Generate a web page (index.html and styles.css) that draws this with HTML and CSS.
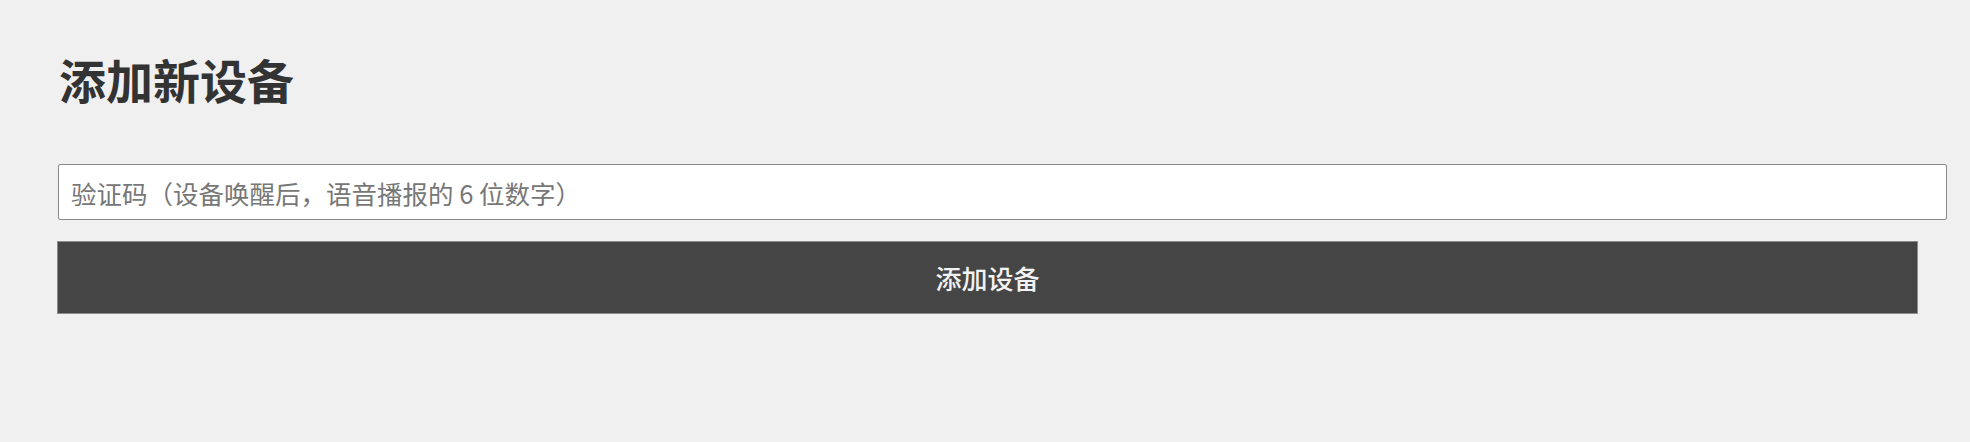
FILE: index.html
```html
<!DOCTYPE html>
<html lang="zh-CN">
<head>
<meta charset="utf-8">
<title>添加新设备</title>
<link rel="stylesheet" href="styles.css">
</head>
<body>
<main class="page">
  <h1 class="title">添加新设备</h1>
  <form class="form">
    <input class="code-input" type="text" placeholder="验证码（设备唤醒后，语音播报的 6 位数字）">
    <button class="submit" type="button">添加设备</button>
  </form>
</main>
</body>
</html>
```

FILE: styles.css
```css
html, body {
  margin: 0;
  padding: 0;
  background: #f0f0f0;
}

body {
  font-family: "Noto Sans CJK SC", "Noto Sans", sans-serif;
  color: #333333;
}

.page {
  padding: 51px 0 0 58px;
}

.title {
  margin: 0 0 0 1px;
  font-size: 47px;
  line-height: 56px;
  font-weight: 700;
  color: #333333;
}

.form {
  display: flex;
  flex-direction: column;
  align-items: flex-start;
  gap: 21px;
  margin-top: 57px;
}

.code-input {
  box-sizing: border-box;
  width: 1889px;
  height: 56px;
  margin: 0;
  padding: 0 12px;
  border: 1px solid #8a8a8a;
  border-radius: 2px;
  background: #ffffff;
  font-family: "Noto Sans CJK SC", "Noto Sans", sans-serif;
  font-size: 25.5px;
  color: #333333;
  outline: none;
}

.code-input::placeholder {
  color: #777777;
}

.submit {
  box-sizing: border-box;
  width: 1861px;
  height: 73px;
  margin: 0 0 0 -1px;
  padding: 0;
  border: 1px solid #8c8c8c;
  background: #454545;
  color: #f2f2f2;
  font-family: "Noto Sans CJK SC", "Noto Sans", sans-serif;
  font-size: 26px;
  font-weight: 500;
  cursor: pointer;
}
```
